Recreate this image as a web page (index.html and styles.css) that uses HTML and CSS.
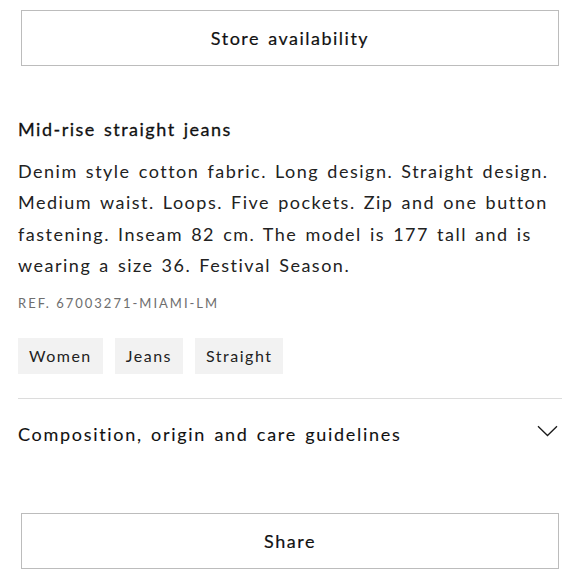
FILE: index.html
```html
<!DOCTYPE html>
<html lang="en">
<head>
<meta charset="utf-8">
<link rel="stylesheet" href="styles.css">
</head>
<body>
<div class="page">
  <button class="btn btn-top">Store availability</button>

  <section class="product">
    <h1 class="title">Mid-rise straight jeans</h1>
    <p class="desc">Denim style cotton fabric. Long design. Straight design. Medium waist. Loops. Five pockets. Zip and one button fastening. Inseam 82 cm. The model is 177 tall and is wearing a size 36. Festival Season.</p>
    <p class="ref">REF. 67003271-MIAMI-LM</p>
    <ul class="tags">
      <li class="tag">Women</li>
      <li class="tag">Jeans</li>
      <li class="tag">Straight</li>
    </ul>
  </section>

  <div class="divider"></div>

  <div class="accordion">
    <span class="acc-label">Composition, origin and care guidelines</span>
    <svg class="chevron" width="21" height="12" viewBox="0 0 21 12" aria-hidden="true">
      <path d="M1 1.2 L10.5 10.5 L20 1.2" fill="none" stroke="#1a1a1a" stroke-width="1.3"/>
    </svg>
  </div>

  <button class="btn btn-share">Share</button>
</div>
</body>
</html>
```
FILE: styles.css
```css
* { box-sizing: border-box; }
html, body { margin: 0; padding: 0; background: #fff; }
body {
  font-family: "Lato", "Open Sans", sans-serif;
  color: #1a1a1a;
}
.page {
  width: 580px;
  padding: 10px 18px 0 18px;
  display: flex;
  flex-direction: column;
}
.btn {
  display: flex;
  align-items: center;
  justify-content: center;
  width: 538px;
  height: 56px;
  margin-left: 3px;
  background: #fff;
  border: 1px solid #bcbcbc;
  font-family: inherit;
  font-size: 18px;
  font-weight: 400;
  -webkit-text-stroke: 0.2px #111;
  letter-spacing: 1.5px;
  word-spacing: 2px;
  color: #111;
  padding: 0;
}
.product { margin-top: 51px; }
.title {
  margin: 0;
  font-size: 18px;
  line-height: 24px;
  font-weight: 400;
  -webkit-text-stroke: 0.3px #111;
  letter-spacing: 1.5px;
  word-spacing: 2px;
  color: #111;
}
.desc {
  margin: 15px 0 0 0;
  font-size: 18px;
  line-height: 31.3px;
  letter-spacing: 1.5px;
  word-spacing: 2px;
  color: #222;
}
.ref {
  margin: 14px 0 0 0;
  font-size: 13px;
  line-height: 16px;
  letter-spacing: 2px;
  color: #6e6e6e;
}
.tags {
  list-style: none;
  margin: 27px 0 0 0;
  padding: 0;
  display: flex;
  gap: 12px;
}
.tag {
  height: 36px;
  line-height: 36px;
  padding: 0 11px;
  background: #f2f2f2;
  font-size: 16px;
  letter-spacing: 1.5px;
  color: #222;
}
.divider {
  margin: 24px 0 0 0;
  width: 544px;
  height: 1px;
  background: #dcdcdc;
}
.accordion {
  display: flex;
  align-items: center;
  justify-content: space-between;
  padding: 23px 4px 0 0;
}
.acc-label {
  font-size: 18px;
  line-height: 24px;
  letter-spacing: 1.7px;
  word-spacing: 2px;
  -webkit-text-stroke: 0.1px #111;
  color: #111;
}
.chevron { display: block; margin-top: -6px; }
.btn-share { margin-top: 67px; }
```
